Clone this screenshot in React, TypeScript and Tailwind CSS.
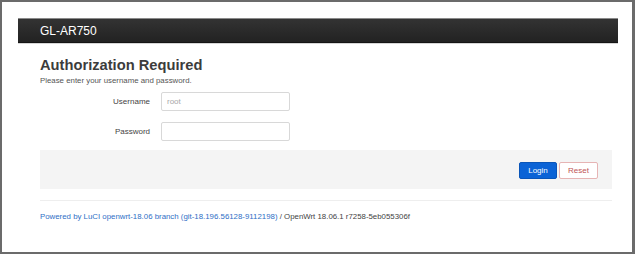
import React from "react";

export default function App() {
  return (
    <div className="w-[635px] h-[254px] bg-white border-t-2 border-l-2 border-b-2 border-r-[3px] border-[#6b6b6b] pt-4 pl-4 font-['Liberation_Sans',Arial,sans-serif] overflow-hidden">
      <div className="w-[600px]">
        <div className="h-[25px] flex items-center pl-[22px] border-t border-t-[#8a8a8a] border-b border-b-[#151515] bg-gradient-to-b from-[#333333] to-[#222222]">
          <span className="text-white text-[12px] leading-none">GL-AR750</span>
        </div>
        <div className="h-px bg-[#d6d6d6]" />
        <div className="ml-[22px] w-[572px]">
          <h1 className="mt-[14px] text-[14.7px] leading-[14px] font-bold text-[#3c3c3c]">
            Authorization Required
          </h1>
          <p className="text-[7.85px] leading-[8px] text-[#555555] mt-[5px]">
            Please enter your username and password.
          </p>
          <div className="mt-[7px] flex flex-col gap-[11px]">
            <div className="flex items-center">
              <label className="w-[110px] text-right text-[8px] text-[#444444]">Username</label>
              <input
                className="ml-[11px] w-[129px] h-[19px] border border-[#d8d8d8] rounded-[2px] px-[5px] text-[8px] text-[#555] placeholder:text-[#a8a8a8] outline-none"
                placeholder="root"
              />
            </div>
            <div className="flex items-center">
              <label className="w-[110px] text-right text-[8px] text-[#444444]">Password</label>
              <input
                type="password"
                className="ml-[11px] w-[129px] h-[19px] border border-[#d8d8d8] rounded-[2px] px-[5px] text-[8px] outline-none"
              />
            </div>
          </div>
          <div className="mt-[9px] h-[39px] bg-[#f4f4f4] flex justify-end items-start pt-[12px] pr-[14px] gap-[2px]">
            <button className="w-[38px] h-[17px] bg-[#0b63d6] rounded-[2px] text-white text-[8px] leading-none border border-[#0a55b8]">
              Login
            </button>
            <button className="w-[39px] h-[17px] bg-white rounded-[2px] text-[#c05555] text-[8px] leading-none border border-[#e6b4b4]">
              Reset
            </button>
          </div>
          <div className="mt-[11px] h-px bg-[#eeeeee]" />
          <p className="mt-[11px] text-[7.85px] leading-[10px] text-[#444444] whitespace-nowrap">
            <span className="text-[#2f6fc6]">Powered by LuCI openwrt-18.06 branch (git-18.196.56128-9112198)</span>
            {" / OpenWrt 18.06.1 r7258-5eb055306f"}
          </p>
        </div>
      </div>
    </div>
  );
}
